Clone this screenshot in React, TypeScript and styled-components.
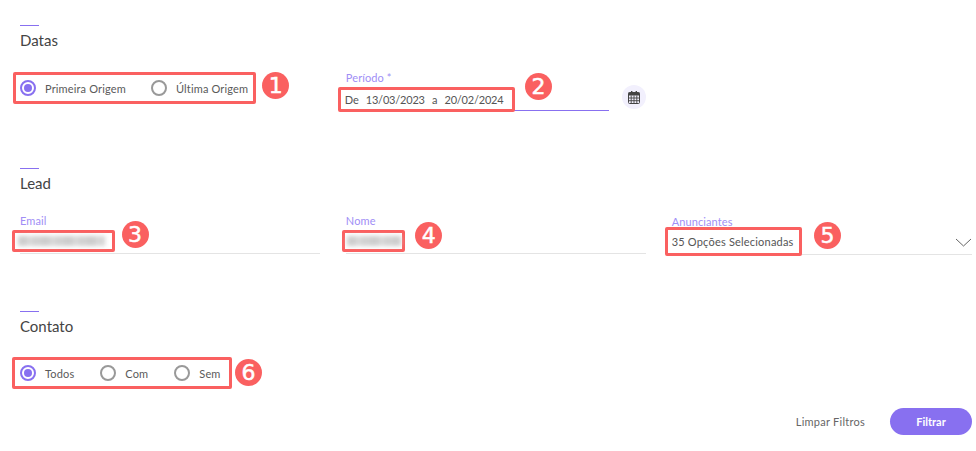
import React from "react";
import styled, { createGlobalStyle } from "styled-components";

const GlobalStyle = createGlobalStyle`
  html, body { margin: 0; padding: 0; background: #fff; }
  body { font-family: "Lato", "Open Sans", sans-serif; }
`;

const violet = "#8870f0";
const red = "#fa6060";

const Page = styled.main`
  width: 976px;
  height: 451px;
  box-sizing: border-box;
  padding-top: 25px;
  overflow: hidden;
`;

const Section = styled.section<{ $height?: number }>`
  height: ${({ $height }) => ($height ? `${$height}px` : "auto")};
`;

const Dash = styled.div`
  width: 19px;
  height: 1px;
  margin-left: 20px;
  background: ${violet};
`;

const Title = styled.h2`
  height: 24px;
  margin: 0 0 0 20px;
  font-size: 15px;
  font-weight: 400;
  line-height: 28px;
  color: #444;
`;

const Row = styled.div<{ $top: number }>`
  display: grid;
  grid-template-columns: repeat(3, 1fr);
  column-gap: 25.5px;
  margin-top: ${({ $top }) => $top}px;
  padding: 0 4px 0 20px;
`;

const Highlight = styled.div<{ $left: number; $top: number; $height: number; $right?: number; $pad?: number }>`
  position: relative;
  z-index: 1;
  display: inline-flex;
  align-items: center;
  box-sizing: border-box;
  height: ${({ $height }) => $height}px;
  margin-left: ${({ $left }) => $left}px;
  margin-top: ${({ $top }) => $top}px;
  padding: 0 ${({ $right }) => $right ?? 3}px 0 ${({ $pad }) => $pad ?? 3}px;
  border: 3px solid ${red};
  border-radius: 2px;
  background: #fff;
`;

const Badge = styled.span<{ $x: number; $y: number }>`
  position: absolute;
  left: calc(100% + ${({ $x }) => $x}px);
  top: ${({ $y }) => $y}px;
  width: 27px;
  height: 27px;
  border-radius: 50%;
  background: ${red};
  color: #fff;
  font-family: "DejaVu Sans", sans-serif;
  font-size: 22px;
  font-weight: 400;
  line-height: 27px;
  text-align: center;
  -webkit-text-stroke: 0.5px #fff;
`;

const RadioGroup = styled.div<{ $gap: number }>`
  display: flex;
  gap: ${({ $gap }) => $gap}px;
`;

const RadioItem = styled.label`
  display: flex;
  align-items: center;
  gap: 9px;
  font-size: 11px;
  letter-spacing: 0.15px;
  color: #5a5a5a;
  white-space: nowrap;
`;

const RadioMark = styled.span<{ $on?: boolean }>`
  display: flex;
  align-items: center;
  justify-content: center;
  box-sizing: border-box;
  width: 16px;
  height: 16px;
  border: 2px solid ${({ $on }) => ($on ? violet : "#999")};
  border-radius: 50%;
  &::after {
    content: "";
    display: ${({ $on }) => ($on ? "block" : "none")};
    width: 8px;
    height: 8px;
    border-radius: 50%;
    background: ${violet};
  }
`;

const PeriodWrap = styled.div`
  display: flex;
  align-items: flex-start;
`;

const Field = styled.div<{ $width?: number; $drop?: number }>`
  width: ${({ $width }) => ($width ? `${$width}px` : "auto")};
  margin-top: ${({ $drop }) => $drop ?? 0}px;
`;

const FieldLabel = styled.div`
  height: 14px;
  font-size: 11px;
  line-height: 14px;
  letter-spacing: 0.1px;
  color: #a08ef6;
`;

const Line = styled.div<{ $active?: boolean }>`
  display: flex;
  align-items: flex-start;
  box-sizing: border-box;
  height: 26px;
  border-bottom: 1px solid ${({ $active }) => ($active ? violet : "#e4e4e4")};
`;

const ValueText = styled.span<{ $tight?: boolean }>`
  font-size: 11px;
  letter-spacing: ${({ $tight }) => ($tight ? "-0.2px" : "0.2px")};
  word-spacing: ${({ $tight }) => ($tight ? "1px" : "0")};
  color: #555;
  white-space: pre;
`;

const Redacted = styled.span<{ $width: number }>`
  display: block;
  width: ${({ $width }) => $width}px;
  height: 10px;
  background: repeating-linear-gradient(90deg, #cdcdcd 0 9px, #dadada 9px 14px, #d2d2d2 14px 23px);
  filter: blur(2px);
`;

const Chevron = styled.svg`
  flex: none;
  margin: 9px 0 0 auto;
`;

const CalendarButton = styled.button`
  display: flex;
  align-items: center;
  justify-content: center;
  flex: none;
  width: 24px;
  height: 24px;
  margin: 14px 0 0 13px;
  padding: 0;
  border: 0;
  border-radius: 50%;
  background: #f2f0fd;
`;

const Footer = styled.footer`
  display: flex;
  align-items: center;
  justify-content: flex-end;
  gap: 25px;
  margin-top: 19px;
  padding-right: 4px;
`;

const GhostButton = styled.button`
  padding: 0;
  border: 0;
  background: none;
  font-family: inherit;
  font-size: 11px;
  letter-spacing: 0.25px;
  color: #666;
`;

const PrimaryButton = styled.button`
  width: 82px;
  height: 27px;
  border: 0;
  border-radius: 14px;
  background: ${violet};
  color: #fff;
  font-family: inherit;
  font-size: 11px;
  font-weight: 700;
`;

const CalendarIcon = () => (
  <svg width="12" height="13" viewBox="0 0 12 13" fill="none">
    <rect x="3" y="0" width="1.4" height="3" fill="#444" />
    <rect x="7.6" y="0" width="1.4" height="3" fill="#444" />
    <rect x="0.5" y="1.5" width="11" height="11" rx="1" stroke="#444" />
    <rect x="0.5" y="1.5" width="11" height="3" fill="#444" />
    <path d="M0.5 7h11M0.5 9.7h11M3.2 4.5v8M6 4.5v8M8.8 4.5v8" stroke="#444" strokeWidth="0.9" />
  </svg>
);

const Radio = ({ label, on }: { label: string; on?: boolean }) => (
  <RadioItem>
    <RadioMark $on={on} />
    {label}
  </RadioItem>
);

export default function App() {
  return (
    <Page>
      <GlobalStyle />
      <Section $height={143}>
        <Dash />
        <Title>Datas</Title>
        <Row $top={21}>
          <div>
            <Highlight $left={-7} $top={1} $height={32} $pad={4} $right={5}>
              <RadioGroup $gap={25}>
                <Radio label="Primeira Origem" on />
                <Radio label="Última Origem" />
              </RadioGroup>
              <Badge $x={9} $y={-3}>1</Badge>
            </Highlight>
          </div>
          <PeriodWrap>
            <Field $width={263}>
              <FieldLabel>Período *</FieldLabel>
              <Line $active>
                <Highlight $left={-8} $top={2} $height={25} $pad={4} $right={9}>
                  <ValueText $tight>De  13/03/2023  a  20/02/2024</ValueText>
                  <Badge $x={12.5} $y={-17}>2</Badge>
                </Highlight>
              </Line>
            </Field>
            <CalendarButton aria-label="Abrir calendário">
              <CalendarIcon />
            </CalendarButton>
          </PeriodWrap>
        </Row>
      </Section>

      <Section $height={143}>
        <Dash />
        <Title>Lead</Title>
        <Row $top={21}>
          <Field>
            <FieldLabel>Email</FieldLabel>
            <Line>
              <Highlight $left={-8} $top={2} $height={22} $pad={3} $right={7}>
                <Redacted $width={87} />
                <Badge $x={9.5} $y={-12.5}>3</Badge>
              </Highlight>
            </Line>
          </Field>
          <Field>
            <FieldLabel>Nome</FieldLabel>
            <Line>
              <Highlight $left={-4} $top={2} $height={22} $pad={2} $right={1}>
                <Redacted $width={54} />
                <Badge $x={13.5} $y={-11.5}>4</Badge>
              </Highlight>
            </Line>
          </Field>
          <Field $drop={1}>
            <FieldLabel>Anunciantes</FieldLabel>
            <Line>
              <Highlight $left={-7} $top={-2} $height={29} $pad={4} $right={5}>
                <ValueText>35 Opções Selecionadas</ValueText>
                <Badge $x={15.5} $y={-8.5}>5</Badge>
              </Highlight>
              <Chevron width="17" height="9" viewBox="0 0 17 9" fill="none">
                <path d="M1 1l7.5 7L16 1" stroke="#666" strokeWidth="1" />
              </Chevron>
            </Line>
          </Field>
        </Row>
      </Section>

      <Section>
        <Dash />
        <Title>Contato</Title>
        <Row $top={20}>
          <div>
            <Highlight $left={-8} $top={1} $height={32} $pad={5} $right={8}>
              <RadioGroup $gap={26}>
                <Radio label="Todos" on />
                <Radio label="Com" />
                <Radio label="Sem" />
              </RadioGroup>
              <Badge $x={6.5} $y={-1}>6</Badge>
            </Highlight>
          </div>
        </Row>
      </Section>

      <Footer>
        <GhostButton>Limpar Filtros</GhostButton>
        <PrimaryButton>Filtrar</PrimaryButton>
      </Footer>
    </Page>
  );
}
